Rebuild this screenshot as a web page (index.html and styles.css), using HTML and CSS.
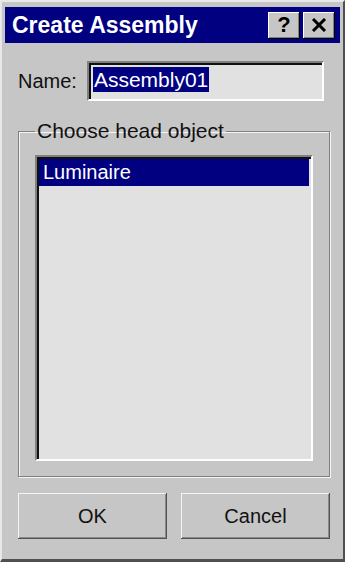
FILE: index.html
```html
<!DOCTYPE html>
<html lang="en">
<head>
    <meta charset="UTF-8">
    <title>Create Assembly</title>
    <link rel="stylesheet" href="styles.css">
</head>
<body>
    <div class="window">
        <div class="titlebar">
            <span class="title">Create Assembly</span>
            <div class="caption-buttons">
                <button class="cap-btn help">?</button>
                <button class="cap-btn close">
                    <svg width="16" height="14" viewBox="0 0 16 14">
                        <path d="M2 1 L14 13 M14 1 L2 13" stroke="#000" stroke-width="3" fill="none"/>
                    </svg>
                </button>
            </div>
        </div>

        <div class="content">
            <div class="name-row">
                <label for="name">Name:</label>
                <div class="field" id="name"><span class="sel">Assembly01</span></div>
            </div>

            <fieldset class="group">
                <legend>Choose head object</legend>
                <div class="listbox">
                    <div class="item selected">Luminaire</div>
                </div>
            </fieldset>

            <div class="buttons">
                <button class="btn">OK</button>
                <button class="btn">Cancel</button>
            </div>
        </div>
    </div>
</body>
</html>
```

FILE: styles.css
```css
body {
    margin: 0;
    font-family: 'Liberation Sans', Arial, sans-serif;
    background-color: #c6c6c6;
}

.window {
    width: 345px;
    height: 562px;
    box-sizing: border-box;
    background-color: #c6c6c6;
    border-top: 2px solid #e8e8e8;
    border-left: 2px solid #e8e8e8;
    border-right: 2px solid #505050;
    border-bottom: 3px solid #505050;
    padding: 5px 3px 0 3px;
}

/* Title bar */
.titlebar {
    height: 36px;
    background-color: #000080;
    display: flex;
    align-items: center;
    justify-content: space-between;
    padding: 0 5px 0 7px;
}

.title {
    color: #fff;
    font-weight: bold;
    font-size: 23px;
}

.caption-buttons {
    display: flex;
    gap: 3px;
}

.cap-btn {
    width: 32px;
    height: 27px;
    padding: 0;
    background-color: #c6c6c6;
    border: none;
    box-shadow: inset -1px -1px #000, inset 1px 1px #fff, inset -2px -2px #808080;
    display: flex;
    align-items: center;
    justify-content: center;
    font-family: 'Liberation Sans', Arial, sans-serif;
    font-weight: bold;
    font-size: 22px;
    color: #000;
}

/* Content */
.content {
    padding: 18px 10px 0 13px;
}

.name-row {
    display: flex;
    align-items: center;
    gap: 10px;
}

label {
    font-size: 20px;
    color: #111;
}

.field {
    width: 237px;
    height: 40px;
    box-sizing: border-box;
    background-color: #e1e1e1;
    border-top: 2px solid #808080;
    border-left: 2px solid #808080;
    border-right: 2px solid #fff;
    border-bottom: 2px solid #fff;
    box-shadow: inset 2px 2px #101010;
    padding: 4px 0 0 4px;
}

.sel {
    display: inline-block;
    background-color: #000080;
    color: #fff;
    font-size: 21px;
    line-height: 25px;
    padding: 0 1px;
}

/* Group box */
.group {
    margin: 18px 0 0 0;
    min-width: 0;
    height: 358px;
    box-sizing: border-box;
    border: 1px solid #808080;
    box-shadow: inset 1px 1px #f4f4f4, 1px 1px #f4f4f4;
    padding: 12px 16px 16px 16px;
}

legend {
    font-size: 21px;
    color: #111;
    padding: 0 2px;
    margin-left: 0;
    line-height: 24px;
}

.listbox {
    height: 306px;
    box-sizing: border-box;
    background-color: #e1e1e1;
    border-top: 2px solid #808080;
    border-left: 2px solid #808080;
    border-right: 2px solid #fff;
    border-bottom: 2px solid #fff;
    box-shadow: inset 2px 2px #101010;
    padding: 2px 2px 0 2px;
}

.item {
    height: 27px;
    line-height: 27px;
    font-size: 20px;
    padding-left: 4px;
}

.item.selected {
    background-color: #000080;
    color: #fff;
}

/* Buttons */
.buttons {
    display: flex;
    gap: 14px;
    margin-top: 16px;
}

.btn {
    width: 149px;
    height: 46px;
    background-color: #c6c6c6;
    border: none;
    box-shadow: inset -1px -1px #505050, inset 1px 1px #f4f4f4, inset -2px -2px #8a8a8a;
    font-family: 'Liberation Sans', Arial, sans-serif;
    font-size: 20px;
    color: #111;
}
```
